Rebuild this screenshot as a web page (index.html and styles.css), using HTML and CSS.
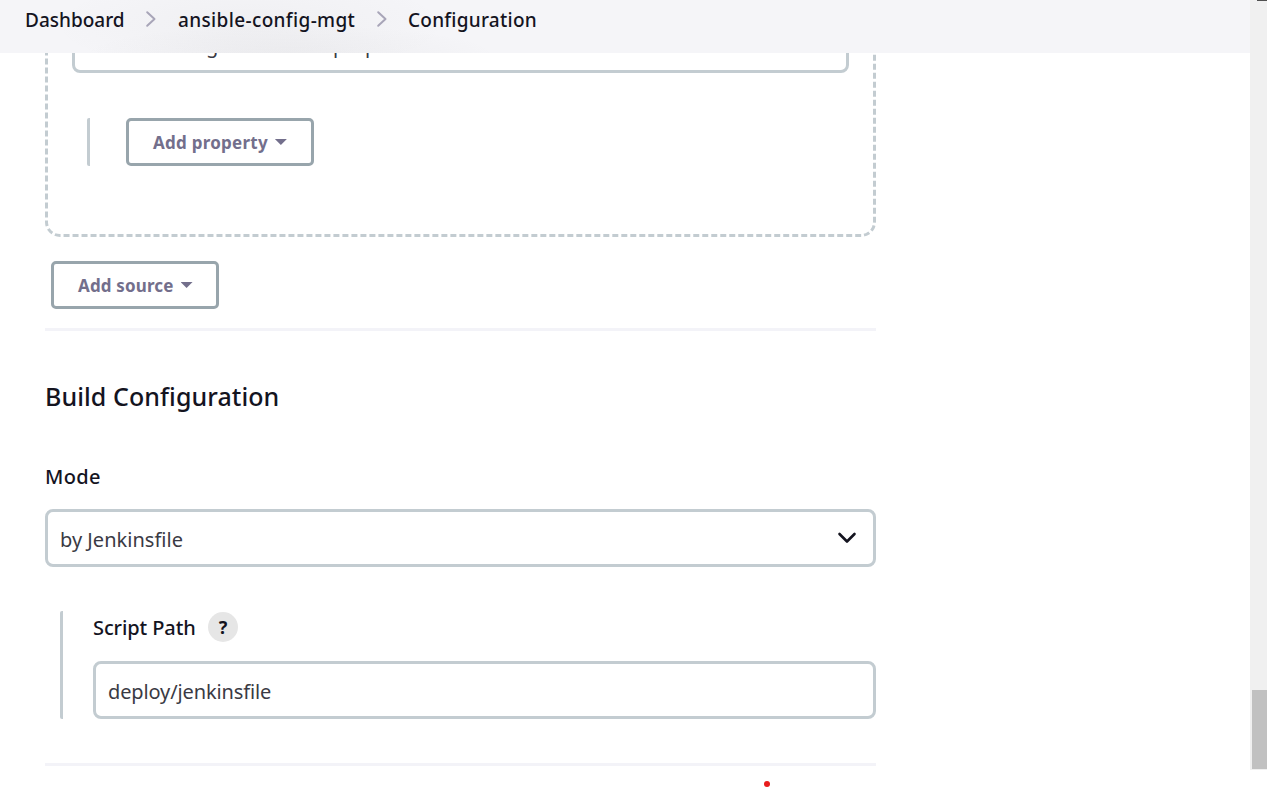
FILE: index.html
```html
<!DOCTYPE html>
<html lang="en">
<head>
<meta charset="utf-8">
<title>ansible-config-mgt Configuration</title>
<link rel="stylesheet" href="styles.css">
</head>
<body>
<div class="viewport">
  <main class="page">
    <header class="breadcrumbs">
      <span class="crumb crumb-dashboard">Dashboard</span>
      <svg class="crumb-sep" viewBox="0 0 12 18"><path d="M2.200 2.200 9.500 9l-7.300 6.800"/></svg>
      <span class="crumb crumb-project">ansible-config-mgt</span>
      <svg class="crumb-sep" viewBox="0 0 12 18"><path d="M2.200 2.200 9.500 9l-7.300 6.800"/></svg>
      <span class="crumb crumb-current">Configuration</span>
    </header>
    <div class="form">
      <section class="source">
        <div class="field strategy"><span class="strategy-text">All branches get the same properties</span></div>
        <div class="nested nested-property">
          <button class="button button-property"><span>Add property</span><i class="caret"></i></button>
        </div>
      </section>
      <button class="button button-source"><span>Add source</span><i class="caret"></i></button>
      <hr class="rule">
      <h2 class="heading"><span>Build Configuration</span></h2>
      <label class="label label-mode">Mode</label>
      <div class="field mode">
        <span class="mode-text">by Jenkinsfile</span>
        <svg class="chevron" viewBox="0 0 20 14"><path d="M2.500 3 10 10.500 17.500 3"/></svg>
      </div>
      <div class="nested nested-script">
        <div class="script-head"><label class="label label-script">Script Path</label><span class="help">?</span></div>
        <div class="field script"><span class="script-text">deploy/jenkinsfile</span></div>
      </div>
      <hr class="rule">
    </div>
    <i class="dot"></i>
  </main>
  <aside class="scrollbar"><div class="scroll-cap"></div><div class="thumb"></div></aside>
</div>
</body>
</html>
```
FILE: styles.css
```css
* { box-sizing: border-box; }
body {
  margin: 0;
  background: #fff;
  color: #14141f;
  font-family: "Noto Sans", "Open Sans", sans-serif;
  overflow: hidden;
}
.viewport { display: flex; width: 1267px; height: 788px; overflow: hidden; }
.page { position: relative; width: 1250px; overflow: hidden; }
.breadcrumbs {
  position: absolute;
  inset: 0 0 auto 0;
  z-index: 2;
  height: 53px;
  padding: 0 0 13px 25px;
  display: flex;
  align-items: center;
  background:
    radial-gradient(ellipse 210px 32px at 290px 56px, rgba(90, 90, 90, .05), rgba(90, 90, 90, 0)),
    radial-gradient(ellipse 200px 50px at 250px 25px, rgba(90, 90, 90, .035), rgba(90, 90, 90, 0)),
    #f5f5f8;
  white-space: nowrap;
}
.crumb { font-size: 19px; font-weight: 500; line-height: 28px; }
.crumb-dashboard { width: 120px; }
.crumb-project { width: 198px; margin-left: 21px; letter-spacing: .36px; }
.crumb-current { margin-left: 20px; letter-spacing: .25px; }
.crumb-sep { width: 12px; height: 18px; flex: none; margin-top: -2px; }
.crumb-sep path { fill: none; stroke: #a8a5b8; stroke-width: 2; stroke-linecap: round; stroke-linejoin: round; }
.form { width: 831px; margin-left: 45px; display: flex; flex-direction: column; align-items: flex-start; }
.source {
  width: 831px;
  height: 337px;
  margin-top: -100px;
  padding: 112px 0 0 24px;
  border: 3px dashed #c3ccd1;
  border-radius: 15px;
}
.field {
  height: 58px;
  display: flex;
  align-items: center;
  border: 3px solid #c3ccd1;
  border-radius: 8px;
  padding: 2px 12px 0;
  background: #fff;
  font-size: 20px;
  font-weight: 400;
  color: #3a3a44;
  white-space: nowrap;
}
.strategy { width: 777px; }
.strategy-text { letter-spacing: -.08px; }
.mode-text { letter-spacing: .02px; }
.script-text { letter-spacing: -.13px; }
.nested { border-left: 3px solid #c3ccd1; border-radius: 2px; }
.nested-property { height: 48px; margin: 45px 0 0 15px; padding-left: 36px; }
.button {
  height: 48px;
  display: flex;
  align-items: center;
  gap: 7px;
  padding: 0 0 0 24px;
  border: 3px solid #98a5ac;
  border-radius: 5px;
  background: #fff;
  color: #736f8c;
  font: 700 17px "Noto Sans", sans-serif;
  letter-spacing: .15px;
  white-space: nowrap;
}
.button-property { width: 188px; letter-spacing: .25px; }
.button-source { width: 168px; margin: 24px 0 0 6px; }
.caret { width: 12px; height: 6px; background: currentColor; clip-path: polygon(0 0, 100% 0, 50% 100%); }
.rule { width: 831px; height: 3px; margin: 19px 0 0; border: 0; background: #f3f3f8; }
.heading { margin: 46px 0 0; font-size: 25px; font-weight: 500; line-height: 38px; letter-spacing: .08px; white-space: nowrap; }
.label { font-size: 20px; font-weight: 500; line-height: 28px; white-space: nowrap; }
.label-mode { margin-top: 48px; letter-spacing: .3px; }
.mode { width: 831px; margin-top: 18px; justify-content: space-between; padding-right: 16px; }
.chevron { width: 20px; height: 14px; margin-top: -3px; }
.chevron path { fill: none; stroke: #14141f; stroke-width: 2.600; stroke-linecap: round; stroke-linejoin: round; }
.nested-script { width: 816px; height: 108px; margin: 44px 0 0 15px; padding-left: 30px; }
.script-head { display: flex; align-items: center; height: 33px; margin-bottom: 17px; }
.label-script { width: 115px; letter-spacing: -.1px; }
.help {
  width: 30px;
  height: 30px;
  margin-top: -1px;
  border-radius: 50%;
  background: #e6e6e6;
  font-size: 18px;
  font-weight: 700;
  line-height: 30px;
  text-align: center;
}
.script { width: 783px; padding-top: 3px; }
.nested-script + .rule { margin-top: 44px; }
.dot { position: absolute; left: 764px; top: 781px; width: 6px; height: 6px; border-radius: 50%; background: #e81c1c; }
.scrollbar { width: 17px; height: 770px; padding-left: 2px; background: #f0f0f0; }
.scroll-cap { width: 10px; height: 1px; margin: 0 0 689px 5px; background: #505050; }
.thumb { width: 15px; height: 79px; background: #c1c1c1; }
```
